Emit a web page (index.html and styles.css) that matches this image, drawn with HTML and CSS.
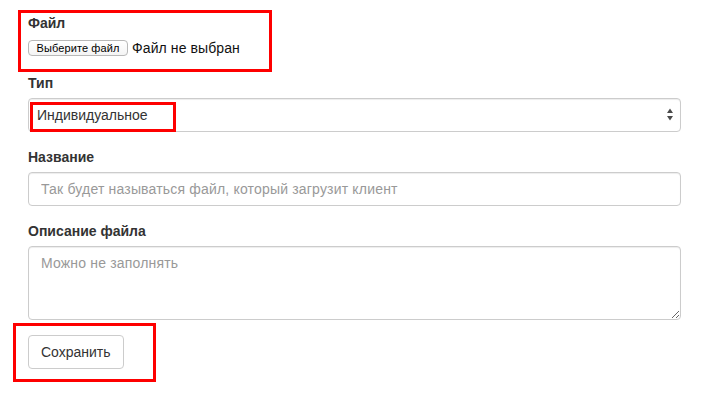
FILE: index.html
```html
<!DOCTYPE html>
<html lang="ru">
<head>
<meta charset="utf-8">
<title>Файл</title>
<link rel="stylesheet" href="styles.css">
</head>
<body>
<form class="form">
  <div class="group">
    <label class="label">Файл</label>
    <div class="file-row">
      <button type="button" class="file-btn">Выберите файл</button>
      <span class="file-name">Файл не выбран</span>
    </div>
  </div>
  <div class="group">
    <label class="label">Тип</label>
    <div class="select-wrap">
      <select class="control select">
        <option>Индивидуальное</option>
      </select>
      <svg class="select-arrows" width="6" height="13" viewBox="0 0 6 13">
        <polygon points="3,0.5 6,5 0,5" fill="#4a4a4a"/>
        <polygon points="0,8 6,8 3,12.5" fill="#4a4a4a"/>
      </svg>
    </div>
  </div>
  <div class="group">
    <label class="label">Название</label>
    <input class="control" type="text" placeholder="Так будет называться файл, который загрузит клиент">
  </div>
  <div class="group">
    <label class="label">Описание файла</label>
    <textarea class="control area" rows="3" placeholder="Можно не заполнять"></textarea>
  </div>
  <button type="button" class="btn">Сохранить</button>
</form>
<div class="mark mark-file"></div>
<div class="mark mark-type"></div>
<div class="mark mark-save"></div>
</body>
</html>
```

FILE: styles.css
```css
* { box-sizing: border-box; }
html, body { margin: 0; padding: 0; background: #fff; }
body {
  position: relative;
  width: 707px;
  height: 402px;
  overflow: hidden;
  font-family: "Liberation Sans", Arial, sans-serif;
  font-size: 14px;
  line-height: 20px;
  color: #333;
}
.form {
  padding: 13px 26px 0 28px;
}
.group { margin-bottom: 15px; }
.label {
  display: block;
  font-weight: bold;
  margin-bottom: 5px;
  line-height: 20px;
}
.file-row {
  display: flex;
  align-items: center;
  height: 20px;
}
.file-btn {
  width: 100px;
  height: 16px;
  padding: 0;
  margin: 0 4px 0 0;
  font-family: "Liberation Sans", Arial, sans-serif;
  font-size: 11px;
  line-height: 14px;
  letter-spacing: 0.1px;
  color: #000;
  background: linear-gradient(#fff, #f4f4f4);
  border: 1px solid #b8b8b8;
  border-radius: 4px;
}
.file-name {
  font-size: 14px;
  letter-spacing: 0.1px;
  color: #111;
}
.control {
  display: block;
  width: 100%;
  height: 34px;
  padding: 6px 12px;
  font-family: "Liberation Sans", Arial, sans-serif;
  font-size: 14px;
  line-height: 20px;
  color: #555;
  background: #fff;
  border: 1px solid #ccc;
  border-radius: 4px;
  box-shadow: inset 0 1px 1px rgba(0,0,0,.075);
  outline: none;
}
.control::placeholder { color: #999; opacity: 1; letter-spacing: 0.18px; }
.select-wrap { position: relative; }
.select {
  appearance: none;
  -webkit-appearance: none;
  padding: 6px 8px;
  color: #333;
}
.select-arrows {
  position: absolute;
  right: 8px;
  top: 10px;
}
.area {
  height: 74px;
  resize: vertical;
}
.btn {
  display: inline-block;
  height: 34px;
  padding: 6px 12px;
  font-family: "Liberation Sans", Arial, sans-serif;
  font-size: 14px;
  line-height: 20px;
  color: #333;
  background: #fff;
  border: 1px solid #ccc;
  border-radius: 4px;
}
.mark {
  position: absolute;
  border: 3px solid #fe0000;
  pointer-events: none;
}
.mark-file { left: 18px; top: 10px; width: 254px; height: 62px; }
.mark-type { left: 30px; top: 102px; width: 146px; height: 30px; }
.mark-save { left: 13px; top: 323px; width: 143px; height: 59px; }
```
